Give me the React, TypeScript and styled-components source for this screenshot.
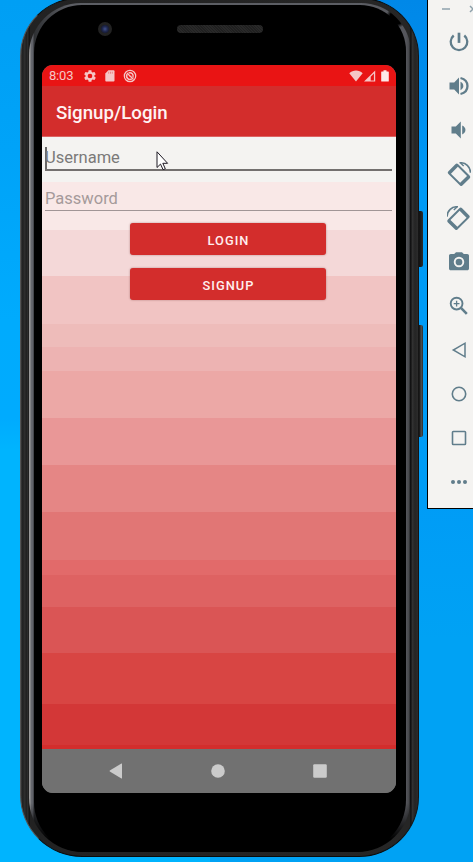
import React from "react";
import styled, { createGlobalStyle } from "styled-components";

const GlobalStyle = createGlobalStyle`
  *, *::before, *::after { box-sizing: border-box; }
  html, body { margin: 0; padding: 0; overflow: hidden; }
  body { font-family: Roboto, "Liberation Sans", sans-serif; }
  svg { display: block; flex: none; }
`;

const Desktop = styled.main`
  display: flex;
  align-items: flex-start;
  width: 473px;
  height: 862px;
  padding-left: 20px;
  overflow: hidden;
  background:
    linear-gradient(to bottom, #009ff4 0, #00a3f8 150px, #00abfd 320px, #00abfe 418px, #00b4fe 450px, #00b4fe 100%) left / 210px 100% no-repeat,
    linear-gradient(to bottom, #0088e8 0, #008eee 100px, #009af6 190px, #009cf6 500px, #00a2f4 640px, #00a2f4 100%);
`;

const Phone = styled.section`
  position: relative;
  flex: none;
  width: 399px;
  height: 859px;
  margin-top: -2px;
  padding: 4px 7px 5px 8px;
  border: 1px solid #0b0b0b;
  border-left-color: #555;
  border-right-color: #151515;
  border-radius: 58px 58px 60px 62px;
  background: linear-gradient(to right, #3a3a3a 0, #1b1b1b 2px, #303030 3px, #1e1e1e 6px, #383838 7px, #080808 8px, #222 9px, #262626 389px, #0a0a0a 390px, #343434 391px, #242424 394px, #2c2c2c 397px);
`;

const Rim = styled.div`
  height: 849px;
  padding: 2px 5px 0 5px;
  border-radius: 52px 50px 54px 54px;
  background:
    radial-gradient(circle at 368px 14px, #000 0, #000 7px, transparent 11px),
    linear-gradient(to bottom, transparent 0, transparent 800px, #000 836px),
    linear-gradient(to right, #999 0, #999 1px, #67696f 2px, #5e6067 4px, #2e3033 5px, #5c5e64 40px, #5c5e64 330px, #55565c 377px, #46474b 380px, #000 382px);
`;

const Face = styled.div`
  display: flex;
  flex-direction: column;
  height: 100%;
  padding: 0 8px;
  border-radius: 48px 46px 52px 50px;
  background: #000;
`;

const Forehead = styled.div`
  display: flex;
  align-items: flex-start;
  height: 60px;
  padding: 17px 0 0 56px;
`;

const Lens = styled.div`
  width: 14px;
  height: 14px;
  border: 3px solid #222;
  border-radius: 50%;
  background: radial-gradient(circle, #40518d 0, #20284d 45%, #141831 80%);
`;

const Speaker = styled.div`
  width: 86px;
  height: 8px;
  margin: 3px 0 0 65px;
  border-radius: 4px;
  background: repeating-linear-gradient(45deg, #292929 0, #292929 1px, #202020 1px, #202020 2px);
`;

const SideKey = styled.div<{ $top: number; $height: number; $lit?: boolean }>`
  position: absolute;
  left: 398px;
  top: ${(p) => p.$top}px;
  width: 4px;
  height: ${(p) => p.$height}px;
  border-radius: 0 2px 2px 0;
  background: ${(p) =>
    p.$lit
      ? "linear-gradient(to right, #1c1c1c 0, #1c1c1c 1px, #555 2px, #2b2b2b 4px)"
      : "linear-gradient(to right, #111, #2c2c2c)"};
`;

const Screen = styled.div`
  display: flex;
  flex-direction: column;
  width: 354px;
  height: 728px;
  overflow: hidden;
  border-radius: 11px;
  background: #717171;
`;

const StatusBar = styled.header`
  display: flex;
  align-items: center;
  height: 21px;
  padding: 0 7px;
  background: #e91414;
  color: #f5c6c6;
  font-size: 13px;
`;

const Clock = styled.span`
  width: 34px;
  line-height: 21px;
  letter-spacing: -0.2px;
`;

const StatusGroup = styled.div<{ $gap: number }>`
  display: flex;
  align-items: center;
  gap: ${(p) => p.$gap}px;
`;

const Spacer = styled.div`
  flex: 1;
`;

const AppBar = styled.div`
  display: flex;
  align-items: center;
  height: 51px;
  padding: 3px 14px 0;
  border-bottom: 1px solid #dc6463;
  background: #d32d2c;
`;

const Title = styled.h1`
  margin: 0;
  color: #fff3f3;
  font-size: 18.7px;
  font-weight: 500;
  line-height: 24px;
`;

const Content = styled.div`
  display: flex;
  flex-direction: column;
  align-items: center;
  height: 612px;
  padding: 0 4px 0 3px;
  background: linear-gradient(
    to bottom,
    #f4f3f1 0 45px,
    #f9e8e7 45px 93px,
    #f4d8d8 93px 139px,
    #f1c4c3 139px 187px,
    #eebcba 187px 210px,
    #edb3b2 210px 234px,
    #eca8a6 234px 281px,
    #e99797 281px 328px,
    #e58685 328px 375px,
    #e17675 375px 423px,
    #e26a6a 423px 438px,
    #de6262 438px 470px,
    #da5555 470px 516px,
    #d84543 516px 567px,
    #d33737 567px 608px,
    #d32d2c 608px 612px
  );
`;

const Field = styled.div<{ $focused?: boolean }>`
  display: flex;
  align-items: center;
  width: 347px;
  height: ${(p) => (p.$focused ? 34 : 40)}px;
  padding-top: ${(p) => (p.$focused ? 9 : 16)}px;
  border-bottom: ${(p) => (p.$focused ? "2px solid #73706f" : "1px solid #a19596")};
  color: ${(p) => (p.$focused ? "#7b7a79" : "#a59a9a")};
  font-size: 16.5px;
  line-height: ${(p) => (p.$focused ? 24 : 23)}px;
`;

const Caret = styled.span`
  width: 2px;
  height: 22px;
  margin-right: -2px;
  background: #686766;
`;

const ActionButton = styled.button<{ $gap: number }>`
  width: 196px;
  height: 32px;
  margin: ${(p) => p.$gap}px 0 0 19px;
  padding: 2px 0 0 1px;
  border: 0;
  border-radius: 3px;
  background: #d32d2c;
  box-shadow: 0 0 2px rgba(90, 20, 20, 0.45);
  color: #ffefef;
  font-family: inherit;
  font-size: 12.8px;
  font-weight: 500;
  letter-spacing: 1.05px;
`;

const NavBar = styled.nav`
  display: flex;
  align-items: center;
  justify-content: space-between;
  height: 44px;
  padding: 0 69px 0 67px;
  background: #717171;
  color: #cbcbcb;
`;

const Toolbar = styled.aside`
  flex: none;
  width: 64px;
  height: 509px;
  margin-left: 8px;
  border: 1px solid #000;
  border-top: 0;
  background: #f4f3f1;
  color: #607d8b;
`;

const WindowControls = styled.div`
  display: flex;
  align-items: center;
  gap: 19px;
  height: 20px;
  padding: 0 0 2px 14px;
  color: #8fa2ac;
`;

const Tool = styled.div`
  display: flex;
  align-items: center;
  justify-content: center;
  height: 44px;
`;

const Pointer = styled.svg`
  position: absolute;
  left: 135px;
  top: 152px;
`;

const Icon = ({ size = 24, children }: { size?: number; children: React.ReactNode }) => (
  <svg width={size} height={size} viewBox="0 0 24 24" fill="currentColor">
    {children}
  </svg>
);

const line = { fill: "none", stroke: "currentColor" } as const;

const TiltedDevice = () => (
  <>
    <path
      fillRule="evenodd"
      transform="rotate(45 12 12.8)"
      d="M4 5.900h16q2 0 2 2v9.800q0 2-2 2H4q-2 0-2-2V7.900q0-2 2-2zM5.500 7.900v9.800h13V7.900z"
    />
    <path {...line} strokeWidth="1.600" d="M12.500.800C18.800.3 23.400 4.600 23.500 10.800" />
    <path {...line} strokeWidth="1.400" d="m13.500 1 3.200 3" />
  </>
);

const tools: { name: string; art: React.ReactNode }[] = [
  {
    name: "power",
    art: (
      <g {...line} strokeWidth="2.300">
        <path d="M12 2.700v10.200" strokeWidth="2.700" />
        <path d="M6.700 5.500a8.300 8.300 0 1 0 10.600 0" />
      </g>
    ),
  },
  {
    name: "volume-up",
    art: (
      <>
        <path d="M2.500 8.600h4.700l4.800-5v16.800l-4.800-5H2.500z" />
        <path d="M13.500 7.800c3.800 1.800 3.800 6.600 0 8.400z" />
        <path {...line} strokeWidth="2.300" d="M13.500 4c9.300 2.200 9.300 13.800 0 16" />
      </>
    ),
  },
  {
    name: "volume-down",
    art: (
      <>
        <path d="M4.500 8.600h4.300l5-5v16.800l-5-5H4.500z" />
        <path d="M15.200 7.600c4.300 1.900 4.300 6.900 0 8.800z" />
      </>
    ),
  },
  { name: "rotate-left", art: <TiltedDevice /> },
  {
    name: "rotate-right",
    art: (
      <g transform="matrix(-1 0 0 1 23.500 0)">
        <TiltedDevice />
      </g>
    ),
  },
  {
    name: "camera",
    art: (
      <>
        <path d="M9 2.200h6l1.800 1.800h3.400c1.100 0 1.800.7 1.800 1.800v12.700c0 1.100-.7 1.800-1.800 1.800H3.800c-1.100 0-1.800-.7-1.800-1.800V5.800c0-1.100.7-1.800 1.800-1.800h3.400z" />
        <circle cx="12" cy="12" r="4.300" fill="none" stroke="#f4f3f1" strokeWidth="1.900" />
      </>
    ),
  },
  {
    name: "zoom",
    art: (
      <g {...line}>
        <circle cx="9.600" cy="9.600" r="5.900" strokeWidth="1.900" />
        <path strokeWidth="2.600" d="m14.200 14.200 5.600 5.600" />
        <path strokeWidth="1.300" d="M9.600 6.700v5.800M6.700 9.600h5.800" />
      </g>
    ),
  },
  { name: "back", art: <path {...line} strokeWidth="1.500" d="M18 5.200v13.600L6.300 12z" /> },
  { name: "home", art: <circle {...line} strokeWidth="1.600" cx="12" cy="12" r="6.700" /> },
  {
    name: "overview",
    art: <rect {...line} strokeWidth="1.600" x="5.500" y="5.500" width="13" height="13" rx="0.800" />,
  },
  {
    name: "more",
    art: (
      <>
        <circle cx="6" cy="12" r="2" />
        <circle cx="12" cy="12" r="2" />
        <circle cx="18" cy="12" r="2" />
      </>
    ),
  },
];

const Gear = () => (
  <Icon size={14}>
    <path d="M19.400 13c.1-.7.1-1.300 0-2l2.100-1.700c.2-.1.2-.4.1-.6l-2-3.500c-.1-.2-.4-.3-.6-.2l-2.500 1c-.5-.4-1.100-.7-1.700-1L14.500 2.400c0-.2-.2-.4-.5-.4h-4c-.3 0-.5.2-.5.400L9.100 5c-.6.3-1.200.6-1.700 1l-2.500-1c-.2-.1-.5 0-.6.2l-2 3.500c-.1.2-.1.5.1.600L4.500 11c-.1.700-.1 1.300 0 2l-2.100 1.700c-.2.100-.2.400-.1.600l2 3.500c.1.200.4.300.6.200l2.500-1c.5.400 1.100.7 1.700 1l.4 2.600c0 .2.2.4.5.4h4c.3 0 .5-.2.5-.4l.4-2.600c.6-.3 1.200-.6 1.700-1l2.500 1c.2.100.5 0 .6-.2l2-3.500c.1-.2.1-.5-.1-.600zM12 16a4 4 0 1 1 0-8 4 4 0 0 1 0 8z" />
  </Icon>
);

const SdCard = () => (
  <svg width="10" height="12" viewBox="0 0 10 12" fill="currentColor">
    <path d="M3.400.3h5.200q.9 0 .9.9v9.400q0 .9-.9.9H1.200q-.9 0-.9-.9V3.500z" />
    <path d="M3.700 1.700v2M5.500 1.700v2M7.300 1.700v2" stroke="#e97575" strokeWidth=".8" />
  </svg>
);

const NoSync = () => (
  <svg width="14" height="14" viewBox="0 0 14 14" fill="none" stroke="currentColor">
    <circle cx="7" cy="7" r="5.700" strokeWidth="1.200" />
    <path strokeWidth="1.500" d="M8.800 9.900A3.400 3.400 0 0 1 4.200 5.100M5.600 4a3.400 3.400 0 0 1 4.300 4.600" />
    <path strokeWidth="1.300" d="m4 4 6.500 6.500M6.500 7.300h2" />
  </svg>
);

export default function App() {
  return (
    <>
      <GlobalStyle />
      <Desktop>
        <Phone>
          <Rim>
            <Face>
              <Forehead>
                <Lens />
                <Speaker />
              </Forehead>
              <Screen>
                <StatusBar>
                  <Clock>8:03</Clock>
                  <StatusGroup $gap={8}>
                    <Gear />
                    <SdCard />
                    <NoSync />
                  </StatusGroup>
                  <Spacer />
                  <StatusGroup $gap={0}>
                    <svg width="14" height="12" viewBox="0 0 14 12" fill="currentColor">
                      <path d="M.3 3.300C4-.3 10-.3 13.700 3.300L7 11.500z" />
                    </svg>
                    <svg width="18" height="12" viewBox="-0.700 0 18 12" fill="currentColor">
                      <path fillRule="evenodd" d="M.3 11.500 11.500.500v11zM7 6.800v3.600h3.200V3.600z" />
                    </svg>
                    <svg width="8" height="12" viewBox="0 0 8 12" fill="#fde9e9">
                      <path d="M2.500.3h3v1.200h1.700q.6 0 .6.600v8.800q0 .6-.6.6H.8q-.6 0-.6-.6V2.100q0-.6.6-.6h1.700z" />
                    </svg>
                  </StatusGroup>
                </StatusBar>
                <AppBar>
                  <Title>Signup/Login</Title>
                </AppBar>
                <Content>
                  <Field $focused>
                    <Caret />
                    Username
                  </Field>
                  <Field>Password</Field>
                  <ActionButton $gap={12}>LOGIN</ActionButton>
                  <ActionButton $gap={13}>SIGNUP</ActionButton>
                </Content>
                <NavBar>
                  <svg width="14" height="16" viewBox="0 0 14 16" fill="currentColor">
                    <path d="M13 .8v14.400q-.2.400-.6.200L.8 8.500q-.5-.5 0-1L12.400.600q.4-.2.600.2z" />
                  </svg>
                  <svg width="14" height="14" viewBox="0 0 14 14" fill="currentColor">
                    <circle cx="7" cy="7" r="6.800" />
                  </svg>
                  <svg width="14" height="14" viewBox="0 0 14 14" fill="currentColor">
                    <rect x=".2" y=".2" width="13.600" height="13.600" rx="1.200" />
                  </svg>
                </NavBar>
              </Screen>
            </Face>
          </Rim>
          <SideKey $top={212} $height={56} />
          <SideKey $top={326} $height={112} $lit />
          <Pointer width="13" height="20" viewBox="0 0 13 20">
            <path
              d="M1 .8v15.700l3.500-3.400 2.600 5.600 2.200-1-2.500-5.400h4.800z"
              fill="#fff"
              stroke="#1d1823"
              strokeWidth="1"
            />
          </Pointer>
        </Phone>
        <Toolbar>
          <WindowControls>
            <svg width="8" height="2" viewBox="0 0 8 2">
              <path d="M0 1h8" stroke="currentColor" strokeWidth="1.500" />
            </svg>
            <svg width="8" height="8" viewBox="0 0 8 8">
              <path d="m1 1 6 6M7 1 1 7" stroke="currentColor" strokeWidth="1.500" />
            </svg>
          </WindowControls>
          {tools.map((t) => (
            <Tool key={t.name}>
              <Icon>{t.art}</Icon>
            </Tool>
          ))}
        </Toolbar>
      </Desktop>
    </>
  );
}
